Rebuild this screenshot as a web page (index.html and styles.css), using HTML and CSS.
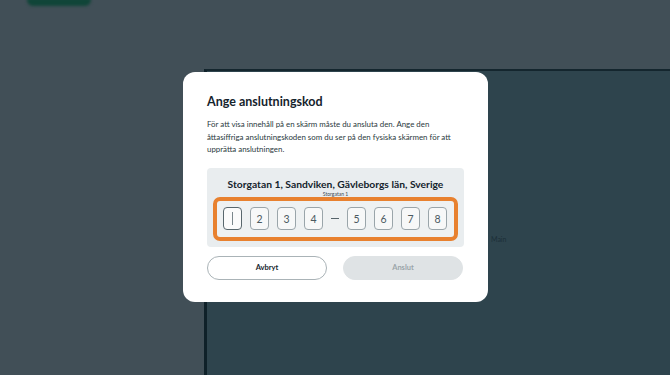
FILE: index.html
```html
<!DOCTYPE html>
<html lang="sv">
<head>
<meta charset="utf-8">
<title>Ange anslutningskod</title>
<link rel="stylesheet" href="styles.css">
</head>
<body>
<div class="app">
  <div class="topbar"><span class="top-btn"></span></div>
  <div class="workspace">
    <div class="panel"><span class="panel-label">Main</span></div>
  </div>
</div>
<div class="overlay">
  <div class="modal">
    <h1 class="modal-title">Ange anslutningskod</h1>
    <p class="modal-text">För att visa innehåll på en skärm måste du ansluta den. Ange den åttasiffriga anslutningskoden som du ser på den fysiska skärmen för att upprätta anslutningen.</p>
    <div class="screen-box">
      <div class="screen-name">Storgatan 1, Sandviken, Gävleborgs län, Sverige</div>
      <div class="screen-sub">Storgatan 1</div>
      <div class="code-frame">
        <span class="cell active"><span class="caret"></span></span>
        <span class="cell">2</span>
        <span class="cell">3</span>
        <span class="cell">4</span>
        <span class="dash"></span>
        <span class="cell">5</span>
        <span class="cell">6</span>
        <span class="cell">7</span>
        <span class="cell">8</span>
      </div>
    </div>
    <div class="actions">
      <button class="btn btn-outline">Avbryt</button>
      <button class="btn btn-disabled">Anslut</button>
    </div>
  </div>
</div>
</body>
</html>
```
FILE: styles.css
```css
* { box-sizing: border-box; }
html, body { margin: 0; padding: 0; }
body {
  width: 670px;
  height: 375px;
  overflow: hidden;
  background: #414f57;
  font-family: "Lato", "Noto Sans", sans-serif;
  color: #1c2b33;
}
.app { display: flex; flex-direction: column; height: 375px; }
.topbar { height: 69px; padding-left: 27px; }
.top-btn {
  display: block;
  width: 64px;
  height: 8px;
  margin-top: -2px;
  border-radius: 0 0 6px 6px;
  background: #104538;
  filter: blur(1.5px);
}
.workspace { flex: 1; display: flex; padding-left: 204px; }
.panel {
  flex: 1;
  background: #2e444d;
  border-left: 3px solid #0f2129;
  border-top: 2px solid #14262e;
  display: flex;
  align-items: flex-start;
  padding-left: 284px;
  padding-top: 164px;
}
.panel-label { font-size: 7px; color: #1c2f38; }
.overlay {
  position: fixed;
  inset: 0;
  display: flex;
  align-items: flex-start;
  justify-content: center;
  padding-top: 72px;
  padding-left: 1px;
}
.modal {
  width: 305px;
  height: 230px;
  background: #fff;
  border-radius: 12px;
  padding: 22px 24px 0 24px;
}
.modal-title {
  margin: 0;
  font-size: 12.5px;
  font-weight: 700;
  line-height: 16px;
  color: #14232c;
}
.modal-text {
  margin: 8px 0 0;
  font-size: 7.9px;
  line-height: 12.5px;
  color: #2a3940;
}
.screen-box {
  margin-top: 12px;
  background: #e9edef;
  border-radius: 4px;
  height: 79px;
  padding-top: 10px;
  display: flex;
  flex-direction: column;
  align-items: center;
}
.screen-name {
  font-size: 10.3px;
  font-weight: 700;
  line-height: 12px;
  color: #14232c;
}
.screen-sub {
  font-size: 5px;
  line-height: 6px;
  margin-top: 1px;
  color: #3a4a52;
}
.code-frame {
  width: 245px;
  height: 44px;
  border: 4px solid #e8812f;
  border-radius: 7px;
  background: #eef1f2;
  display: flex;
  align-items: center;
  padding-left: 6px;
  gap: 8px;
}
.cell {
  width: 19px;
  height: 23px;
  border: 1px solid #9aa5aa;
  border-radius: 4px;
  background: #f7f8f8;
  display: flex;
  align-items: center;
  justify-content: center;
  font-size: 10.5px;
  color: #4a5960;
}
.cell.active { border-color: #59676d; background: #fbfbfb; }
.caret { width: 1px; height: 13px; background: #7b878c; }
.dash { width: 8px; height: 1.5px; background: #56646b; }
.actions {
  margin-top: 9px;
  display: flex;
  gap: 16px;
}
.btn {
  width: 120px;
  height: 24px;
  border-radius: 12px;
  font-family: "Lato", "Noto Sans", sans-serif;
  font-size: 7.5px;
  font-weight: 700;
  padding: 0;
}
.btn-outline { background: #fff; border: 1px solid #aab3b7; color: #16252d; }
.btn-disabled { background: #dfe3e5; border: 1px solid #dfe3e5; color: #9ba5a9; }
```
